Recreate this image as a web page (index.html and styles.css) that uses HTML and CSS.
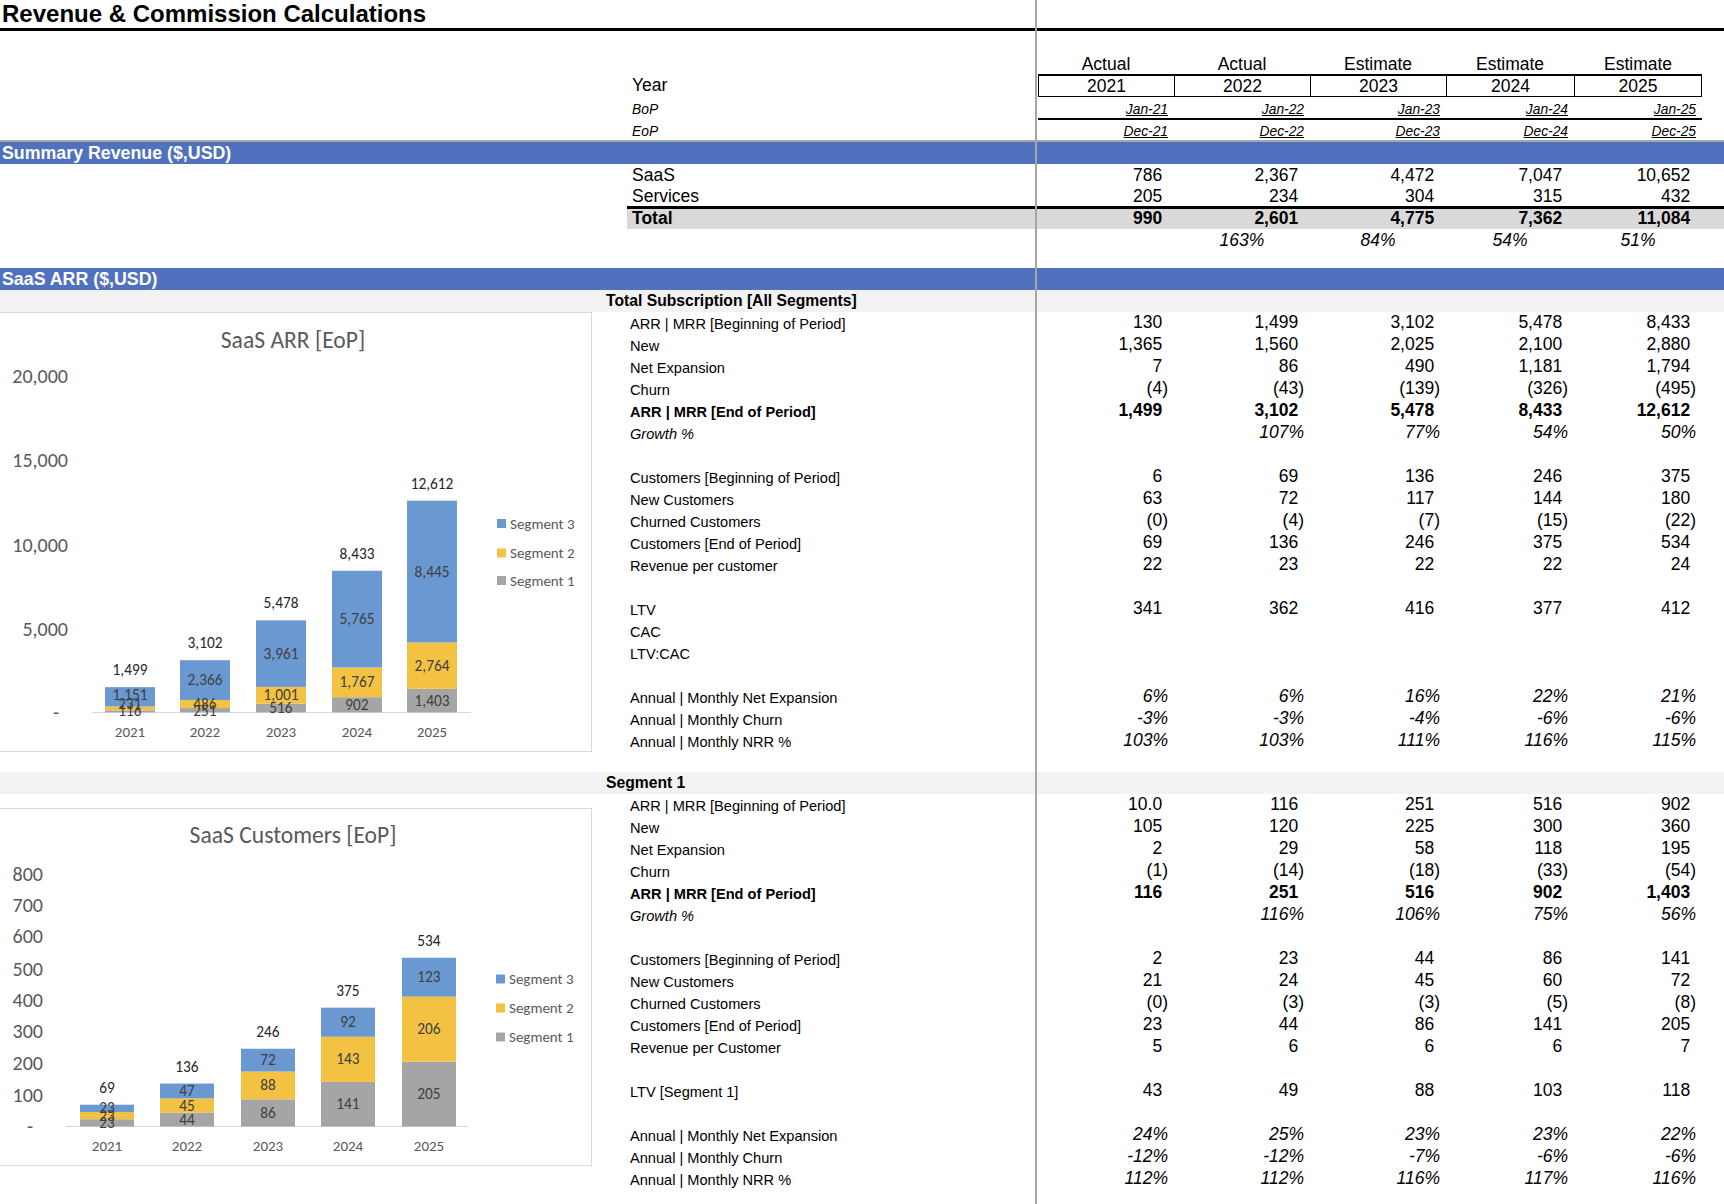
FILE: index.html
```html
<!DOCTYPE html>
<html>
<head>
<meta charset="utf-8">
<title>Revenue &amp; Commission Calculations</title>
<link rel="stylesheet" href="styles.css">
</head>
<body>
<div class="freeze"></div>
<div class="title">Revenue &amp; Commission Calculations</div>
<div class="spacer"></div>

<div class="hrow actual"><div></div><div></div><div>Actual</div><div>Actual</div><div>Estimate</div><div>Estimate</div><div>Estimate</div></div>
<div class="hrow year"><div></div><div class="lab">Year</div><div class="yc">2021</div><div class="yc">2022</div><div class="yc">2023</div><div class="yc">2024</div><div class="yc last">2025</div></div>
<div class="hrow bop"><div></div><div class="lab">BoP</div><div class="dt">Jan-21</div><div class="dt">Jan-22</div><div class="dt">Jan-23</div><div class="dt">Jan-24</div><div class="dt">Jan-25</div></div>
<div class="hrow eop"><div></div><div class="lab">EoP</div><div class="dt">Dec-21</div><div class="dt">Dec-22</div><div class="dt">Dec-23</div><div class="dt">Dec-24</div><div class="dt">Dec-25</div></div>

<div class="band">Summary Revenue ($,USD)</div>
<div class="hrow srow"><div></div><div class="lab">SaaS</div><div class="v a">786</div><div class="v a">2,367</div><div class="v a">4,472</div><div class="v a">7,047</div><div class="v a">10,652</div></div>
<div class="hrow srow"><div></div><div class="lab">Services</div><div class="v a">205</div><div class="v a">234</div><div class="v a">304</div><div class="v a">315</div><div class="v a">432</div></div>
<div class="hrow srow total"><div></div><div class="lab">Total</div><div class="v a">990</div><div class="v a">2,601</div><div class="v a">4,775</div><div class="v a">7,362</div><div class="v a">11,084</div><div></div></div>
<div class="hrow srow pct"><div></div><div></div><div></div><div class="c">163%</div><div class="c">84%</div><div class="c">54%</div><div class="c">51%</div></div>
<div class="blank17"></div>

<div class="band">SaaS ARR ($,USD)</div>
<div class="sub">Total Subscription [All Segments]</div>
<div class="sect">
  <div class="chartcol">
    <div class="chart c1">
      <svg width="591" height="438" viewBox="0 1 591 438">
        <text class="ct" x="293" y="36">SaaS ARR [EoP]</text>
        <g class="ax">
          <text x="68" y="71">20,000</text>
          <text x="68" y="155">15,000</text>
          <text x="68" y="240">10,000</text>
          <text x="68" y="324">5,000</text>
          <text x="59" y="407">-</text>
        </g>
        <line x1="92" y1="400.5" x2="471" y2="400.5" class="axl"/>
        <rect class="s1" x="105" y="398.35" width="50" height="1.95"/>
        <rect class="s2" x="105" y="394.48" width="50" height="3.88"/>
        <rect class="s3" x="105" y="375.16" width="50" height="19.31"/>
        <rect class="s1" x="180" y="396.09" width="50" height="4.21"/>
        <rect class="s2" x="180" y="387.93" width="50" height="8.16"/>
        <rect class="s3" x="180" y="348.23" width="50" height="39.70"/>
        <rect class="s1" x="256" y="391.64" width="50" height="8.66"/>
        <rect class="s2" x="256" y="374.84" width="50" height="16.80"/>
        <rect class="s3" x="256" y="308.38" width="50" height="66.47"/>
        <rect class="s1" x="332" y="385.16" width="50" height="15.14"/>
        <rect class="s2" x="332" y="355.51" width="50" height="29.65"/>
        <rect class="s3" x="332" y="258.77" width="50" height="96.74"/>
        <rect class="s1" x="407" y="376.76" width="50" height="23.54"/>
        <rect class="s2" x="407" y="330.38" width="50" height="46.38"/>
        <rect class="s3" x="407" y="188.67" width="50" height="141.71"/>
        <g class="dl">
          <text x="130" y="387.5">1,151</text>
          <text x="130" y="397">231</text>
          <text x="130" y="404">116</text>
          <text x="205" y="373">2,366</text>
          <text x="205" y="397">486</text>
          <text x="205" y="403.5">251</text>
          <text x="281" y="346.6">3,961</text>
          <text x="281" y="388.2">1,001</text>
          <text x="281" y="401">516</text>
          <text x="357" y="312.1">5,765</text>
          <text x="357" y="375.3">1,767</text>
          <text x="357" y="397.7">902</text>
          <text x="432" y="264.5">8,445</text>
          <text x="432" y="358.6">2,764</text>
          <text x="432" y="393.5">1,403</text>
        </g>
        <g class="tot">
          <text x="130" y="363.2">1,499</text>
          <text x="205" y="336.2">3,102</text>
          <text x="281" y="296.4">5,478</text>
          <text x="357" y="246.8">8,433</text>
          <text x="432" y="176.7">12,612</text>
        </g>
        <g class="cat">
          <text x="130" y="424.5">2021</text>
          <text x="205" y="424.5">2022</text>
          <text x="281" y="424.5">2023</text>
          <text x="357" y="424.5">2024</text>
          <text x="432" y="424.5">2025</text>
        </g>
        <rect class="s3" x="497" y="207" width="9" height="9"/>
        <rect class="s2" x="497" y="236.5" width="9" height="9"/>
        <rect class="s1" x="497" y="264" width="9" height="9"/>
        <g class="lg">
          <text x="510" y="216.5">Segment 3</text>
          <text x="510" y="246">Segment 2</text>
          <text x="510" y="273.6">Segment 1</text>
        </g>
      </svg>
    </div>
  </div>
  <div class="tbl">
    <div class="tr"><div class="lb">ARR | MRR [Beginning of Period]</div><div class="v a">130</div><div class="v a">1,499</div><div class="v a">3,102</div><div class="v a">5,478</div><div class="v a">8,433</div></div>
    <div class="tr"><div class="lb">New</div><div class="v a">1,365</div><div class="v a">1,560</div><div class="v a">2,025</div><div class="v a">2,100</div><div class="v a">2,880</div></div>
    <div class="tr"><div class="lb">Net Expansion</div><div class="v a">7</div><div class="v a">86</div><div class="v a">490</div><div class="v a">1,181</div><div class="v a">1,794</div></div>
    <div class="tr"><div class="lb">Churn</div><div class="v">(4)</div><div class="v">(43)</div><div class="v">(139)</div><div class="v">(326)</div><div class="v">(495)</div></div>
    <div class="tr b"><div class="lb">ARR | MRR [End of Period]</div><div class="v a">1,499</div><div class="v a">3,102</div><div class="v a">5,478</div><div class="v a">8,433</div><div class="v a">12,612</div></div>
    <div class="tr i"><div class="lb">Growth %</div><div class="v"></div><div class="v">107%</div><div class="v">77%</div><div class="v">54%</div><div class="v">50%</div></div>
    <div class="tr"></div>
    <div class="tr"><div class="lb">Customers [Beginning of Period]</div><div class="v a">6</div><div class="v a">69</div><div class="v a">136</div><div class="v a">246</div><div class="v a">375</div></div>
    <div class="tr"><div class="lb">New Customers</div><div class="v a">63</div><div class="v a">72</div><div class="v a">117</div><div class="v a">144</div><div class="v a">180</div></div>
    <div class="tr"><div class="lb">Churned Customers</div><div class="v">(0)</div><div class="v">(4)</div><div class="v">(7)</div><div class="v">(15)</div><div class="v">(22)</div></div>
    <div class="tr"><div class="lb">Customers [End of Period]</div><div class="v a">69</div><div class="v a">136</div><div class="v a">246</div><div class="v a">375</div><div class="v a">534</div></div>
    <div class="tr"><div class="lb">Revenue per customer</div><div class="v a">22</div><div class="v a">23</div><div class="v a">22</div><div class="v a">22</div><div class="v a">24</div></div>
    <div class="tr"></div>
    <div class="tr"><div class="lb">LTV</div><div class="v a">341</div><div class="v a">362</div><div class="v a">416</div><div class="v a">377</div><div class="v a">412</div></div>
    <div class="tr"><div class="lb">CAC</div></div>
    <div class="tr"><div class="lb">LTV:CAC</div></div>
    <div class="tr"></div>
    <div class="tr p"><div class="lb">Annual | Monthly Net Expansion</div><div class="v">6%</div><div class="v">6%</div><div class="v">16%</div><div class="v">22%</div><div class="v">21%</div></div>
    <div class="tr p"><div class="lb">Annual | Monthly Churn</div><div class="v">-3%</div><div class="v">-3%</div><div class="v">-4%</div><div class="v">-6%</div><div class="v">-6%</div></div>
    <div class="tr p"><div class="lb">Annual | Monthly NRR %</div><div class="v">103%</div><div class="v">103%</div><div class="v">111%</div><div class="v">116%</div><div class="v">115%</div></div>
  </div>
</div>
<div class="rowgap"></div>

<div class="sub">Segment 1</div>
<div class="sect">
  <div class="chartcol">
    <div class="chart c2">
      <svg width="591" height="356" viewBox="0 1 591 356">
        <text class="ct" x="293" y="35.3">SaaS Customers [EoP]</text>
        <g class="ax">
          <text x="43" y="72.5">800</text>
          <text x="43" y="103.5">700</text>
          <text x="43" y="135">600</text>
          <text x="43" y="167.5">500</text>
          <text x="43" y="198.5">400</text>
          <text x="43" y="230">300</text>
          <text x="43" y="262">200</text>
          <text x="43" y="293.5">100</text>
          <text x="33" y="325">-</text>
        </g>
        <line x1="66" y1="318.5" x2="469" y2="318.5" class="axl"/>
        <rect class="s1" x="80" y="311.23" width="54" height="7.27"/>
        <rect class="s2" x="80" y="303.96" width="54" height="7.27"/>
        <rect class="s3" x="80" y="296.7" width="54" height="7.26"/>
        <rect class="s1" x="160" y="304.6" width="54" height="13.9"/>
        <rect class="s2" x="160" y="290.38" width="54" height="14.22"/>
        <rect class="s3" x="160" y="275.53" width="54" height="14.85"/>
        <rect class="s1" x="241" y="291.32" width="54" height="27.18"/>
        <rect class="s2" x="241" y="263.51" width="54" height="27.81"/>
        <rect class="s3" x="241" y="240.76" width="54" height="22.75"/>
        <rect class="s1" x="321" y="273.94" width="54" height="44.56"/>
        <rect class="s2" x="321" y="228.75" width="54" height="45.19"/>
        <rect class="s3" x="321" y="199.68" width="54" height="29.07"/>
        <rect class="s1" x="402" y="253.72" width="54" height="64.78"/>
        <rect class="s2" x="402" y="188.62" width="54" height="65.1"/>
        <rect class="s3" x="402" y="149.75" width="54" height="38.87"/>
        <g class="dl">
          <text x="107" y="305.3">23</text>
          <text x="107" y="312.6">23</text>
          <text x="107" y="319.9">23</text>
          <text x="187" y="288">47</text>
          <text x="187" y="302.5">45</text>
          <text x="187" y="316.5">44</text>
          <text x="268" y="257.1">72</text>
          <text x="268" y="282.4">88</text>
          <text x="268" y="309.9">86</text>
          <text x="348" y="219.2">92</text>
          <text x="348" y="256.4">143</text>
          <text x="348" y="301.2">141</text>
          <text x="429" y="174.2">123</text>
          <text x="429" y="226.2">206</text>
          <text x="429" y="291.1">205</text>
        </g>
        <g class="tot">
          <text x="107" y="284.7">69</text>
          <text x="187" y="263.5">136</text>
          <text x="268" y="228.8">246</text>
          <text x="348" y="187.7">375</text>
          <text x="429" y="137.8">534</text>
        </g>
        <g class="cat">
          <text x="107" y="343">2021</text>
          <text x="187" y="343">2022</text>
          <text x="268" y="343">2023</text>
          <text x="348" y="343">2024</text>
          <text x="429" y="343">2025</text>
        </g>
        <rect class="s3" x="496" y="166.5" width="9" height="9"/>
        <rect class="s2" x="496" y="195.5" width="9" height="9"/>
        <rect class="s1" x="496" y="224.5" width="9" height="9"/>
        <g class="lg">
          <text x="509" y="176">Segment 3</text>
          <text x="509" y="205">Segment 2</text>
          <text x="509" y="234">Segment 1</text>
        </g>
      </svg>
    </div>
  </div>
  <div class="tbl">
    <div class="tr"><div class="lb">ARR | MRR [Beginning of Period]</div><div class="v a">10.0</div><div class="v a">116</div><div class="v a">251</div><div class="v a">516</div><div class="v a">902</div></div>
    <div class="tr"><div class="lb">New</div><div class="v a">105</div><div class="v a">120</div><div class="v a">225</div><div class="v a">300</div><div class="v a">360</div></div>
    <div class="tr"><div class="lb">Net Expansion</div><div class="v a">2</div><div class="v a">29</div><div class="v a">58</div><div class="v a">118</div><div class="v a">195</div></div>
    <div class="tr"><div class="lb">Churn</div><div class="v">(1)</div><div class="v">(14)</div><div class="v">(18)</div><div class="v">(33)</div><div class="v">(54)</div></div>
    <div class="tr b"><div class="lb">ARR | MRR [End of Period]</div><div class="v a">116</div><div class="v a">251</div><div class="v a">516</div><div class="v a">902</div><div class="v a">1,403</div></div>
    <div class="tr i"><div class="lb">Growth %</div><div class="v"></div><div class="v">116%</div><div class="v">106%</div><div class="v">75%</div><div class="v">56%</div></div>
    <div class="tr"></div>
    <div class="tr"><div class="lb">Customers [Beginning of Period]</div><div class="v a">2</div><div class="v a">23</div><div class="v a">44</div><div class="v a">86</div><div class="v a">141</div></div>
    <div class="tr"><div class="lb">New Customers</div><div class="v a">21</div><div class="v a">24</div><div class="v a">45</div><div class="v a">60</div><div class="v a">72</div></div>
    <div class="tr"><div class="lb">Churned Customers</div><div class="v">(0)</div><div class="v">(3)</div><div class="v">(3)</div><div class="v">(5)</div><div class="v">(8)</div></div>
    <div class="tr"><div class="lb">Customers [End of Period]</div><div class="v a">23</div><div class="v a">44</div><div class="v a">86</div><div class="v a">141</div><div class="v a">205</div></div>
    <div class="tr"><div class="lb">Revenue per Customer</div><div class="v a">5</div><div class="v a">6</div><div class="v a">6</div><div class="v a">6</div><div class="v a">7</div></div>
    <div class="tr"></div>
    <div class="tr"><div class="lb">LTV [Segment 1]</div><div class="v a">43</div><div class="v a">49</div><div class="v a">88</div><div class="v a">103</div><div class="v a">118</div></div>
    <div class="tr"></div>
    <div class="tr p"><div class="lb">Annual | Monthly Net Expansion</div><div class="v">24%</div><div class="v">25%</div><div class="v">23%</div><div class="v">23%</div><div class="v">22%</div></div>
    <div class="tr p"><div class="lb">Annual | Monthly Churn</div><div class="v">-12%</div><div class="v">-12%</div><div class="v">-7%</div><div class="v">-6%</div><div class="v">-6%</div></div>
    <div class="tr p"><div class="lb">Annual | Monthly NRR %</div><div class="v">112%</div><div class="v">112%</div><div class="v">116%</div><div class="v">117%</div><div class="v">116%</div></div>
  </div>
</div>
</body>
</html>
```

FILE: styles.css
```css
* { box-sizing: border-box; }

body {
  margin: 0;
  width: 1724px;
  height: 1204px;
  position: relative;
  overflow: hidden;
  background: #fff;
  color: #000;
  font-family: "Liberation Sans", Arial, Helvetica, sans-serif;
}

.freeze {
  position: absolute;
  left: 1035px;
  top: 0;
  width: 2px;
  height: 1204px;
  background: #a6a6a6;
  z-index: 5;
}

.title {
  height: 31px;
  border-bottom: 3px solid #000;
  font-size: 24px;
  font-weight: 700;
  line-height: 28px;
  padding-left: 2px;
  white-space: nowrap;
}

.spacer { height: 22px; }

.hrow {
  display: grid;
  grid-template-columns: 627px 411px repeat(3, 136px) repeat(2, 128px) 22px;
  font-size: 17.5px;
  white-space: nowrap;
}

.lab { padding-left: 5px; }

.actual { height: 21px; line-height: 22px; text-align: center; }

.year { height: 22px; line-height: 22px; }
.yc {
  border-top: 2px solid #000;
  border-bottom: 1px solid #000;
  border-left: 1px solid #000;
  text-align: center;
  line-height: 20px;
}
.yc.last { border-right: 1px solid #000; }

.bop { height: 24px; }
.eop { height: 22px; border-bottom: 2px solid #a6a6a6; }
.bop .lab, .eop .lab {
  display: flex;
  align-items: flex-end;
  font-size: 13.8px;
  font-style: italic;
  line-height: 16px;
}
.bop .lab { padding-bottom: 2px; }
.dt {
  display: flex;
  justify-content: flex-end;
  align-items: flex-end;
  padding-right: 6px;
  font-size: 13.8px;
  font-style: italic;
  line-height: 16px;
  text-decoration: underline;
}
.bop .dt { border-bottom: 2px solid #000; }

.band {
  height: 22px;
  background: #4f71be;
  color: #fff;
  font-size: 17.8px;
  font-weight: 700;
  line-height: 22px;
  padding-left: 2px;
  white-space: nowrap;
}

.srow { height: 21px; line-height: 22px; }
.total { height: 23px; line-height: 19px; }
.total > div:not(:first-child) {
  background: #d9d9d9;
  border-top: 3px solid #000;
  font-weight: 700;
}
.pct { height: 22px; line-height: 22px; }
.pct .c { text-align: center; font-style: italic; }
.blank17 { height: 17px; }

.v {
  text-align: right;
  padding-right: 6px;
  white-space: nowrap;
}
.a::after { content: ")"; visibility: hidden; }

.sub {
  height: 22px;
  background: #f2f2f2;
  font-size: 15.7px;
  font-weight: 700;
  line-height: 22px;
  padding-left: 606px;
  white-space: nowrap;
}

.sect { display: flex; }
.chartcol { width: 600px; flex: none; }
.chart {
  width: 592px;
  border: 1px solid #d9d9d9;
  border-left: 0;
  background: #fff;
}
.c1 { height: 440px; }
.c2 { height: 358px; margin-top: 14px; }
.chart svg { display: block; }

.tbl { width: 1124px; flex: none; }
.tr {
  display: grid;
  grid-template-columns: 438px repeat(3, 136px) repeat(2, 128px) 22px;
  height: 22px;
  line-height: 21px;
  font-size: 17.5px;
  white-space: nowrap;
}
.tr .lb { font-size: 14.6px; padding-left: 30px; line-height: 22px; padding-top: 1px; }
.tr.b { font-weight: 700; }
.tr.i .lb, .tr.i .v, .tr.p .v { font-style: italic; }

.rowgap { height: 20px; }

/* chart text */
.chart text { font-family: Carlito, Calibri, Lato, "Liberation Sans", sans-serif; }
.ct { font-size: 23.6px; fill: #595959; text-anchor: middle; }
.ax text { font-size: 20px; fill: #595959; text-anchor: end; }
.cat text { font-size: 15px; fill: #595959; text-anchor: middle; }
.dl text { font-size: 15.3px; fill: #404040; text-anchor: middle; }
.tot text { font-size: 15.3px; fill: #262626; text-anchor: middle; }
.lg text { font-size: 15px; fill: #595959; }
.axl { stroke: #d9d9d9; stroke-width: 1; }
.s1 { fill: #a5a5a5; }
.s2 { fill: #f4c243; }
.s3 { fill: #6a98d0; }
```
